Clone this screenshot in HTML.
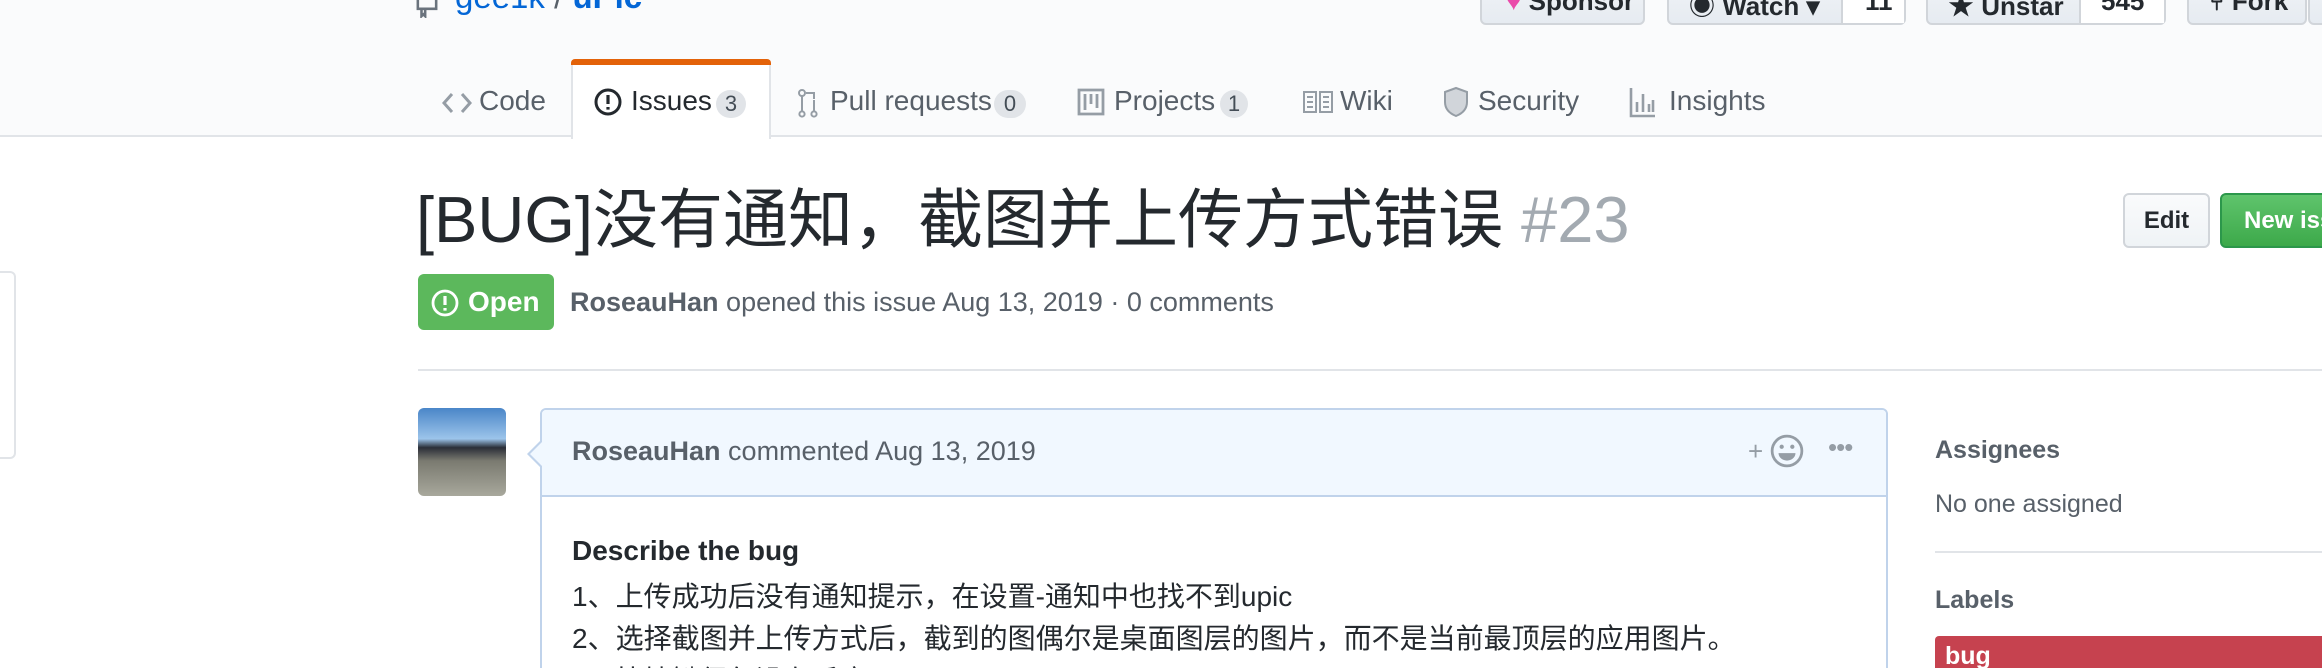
<!DOCTYPE html>
<html style="width:2322px;height:668px;overflow:hidden"><head><meta charset="utf-8"><style>
*{margin:0;padding:0;box-sizing:border-box}
body{width:2322px;height:668px;overflow:hidden;background:#fff;font-family:"Liberation Sans","Noto Sans CJK SC",sans-serif;color:#24292e;position:relative}
.a{position:absolute;white-space:nowrap}
.hdr{position:absolute;left:0;top:0;width:2322px;height:137px;background:#fafbfc;border-bottom:2px solid #e1e4e8}
.btn{position:absolute;top:-20px;height:45px;border:2px solid #d1d5da;border-radius:6px;background:linear-gradient(#f0f3f6,#e6ebf1)}
.btn .t{position:absolute;top:4px;font-size:26px;font-weight:bold}
.cnt{position:absolute;top:0;bottom:0;background:#fff;border-left:2px solid #d1d5da}
.tab{font-size:28px;color:#586069;top:85px}
.ctr{position:absolute;top:90px;height:28px;border-radius:14px;background:#e1e4e8;font-size:22px;color:#444d56;text-align:center;line-height:28px}
</style></head><body>
<div class="hdr"></div>
<svg class="a" style="left:416px;top:-4px" width="22" height="22" viewBox="0 0 12 12"><path d="M1 1h10v6H1z M3 7v4l1-1 1 1V7" fill="none" stroke="#6a737d" stroke-width="1.4"/></svg>
<div class="a" style="left:455px;top:-22px;font-size:33px;color:#0366d6;font-family:'Liberation Sans',sans-serif">gee1k <span style="color:#586069">/</span> <b>uPic</b></div>
<div class="btn" style="left:1480px;width:165px"><div class="t" style="left:24px"><span style="color:#ea4aaa">♥</span> Sponsor</div></div>
<div class="btn" style="left:1667px;width:239px"><div class="t" style="left:20px">◉ Watch ▾</div><div class="cnt" style="left:172px;right:0"><div class="t" style="left:22px">11</div></div></div>
<div class="btn" style="left:1926px;width:240px"><div class="t" style="left:20px">★ Unstar</div><div class="cnt" style="left:151px;right:0"><div class="t" style="left:20px">545</div></div></div>
<div class="btn" style="left:2187px;width:120px"><div class="t" style="left:20px">⑂ Fork</div></div>
<div class="btn" style="left:2308px;width:40px"></div>

<div class="a" style="left:571px;top:63px;width:200px;height:76px;background:#fff;border-left:2px solid #e1e4e8;border-right:2px solid #e1e4e8"></div>
<div class="a" style="left:571px;top:59px;width:200px;height:6px;background:#e36209;border-radius:4px 4px 0 0"></div>

<svg class="a" style="left:442px;top:90px" width="30" height="26" viewBox="0 0 15 13"><path d="M5 2L1 6.5 5 11M10 2l4 4.5-4 4.5" fill="none" stroke="#959da5" stroke-width="1.5"/></svg>
<div class="a tab" style="left:479px">Code</div>
<svg class="a" style="left:594px;top:88px" width="28" height="28" viewBox="0 0 14 14"><circle cx="7" cy="7" r="6" fill="none" stroke="#24292e" stroke-width="1.5"/><path d="M7 3.5v4.5M7 9.5v1.3" stroke="#24292e" stroke-width="1.6"/></svg>
<div class="a tab" style="left:631px;color:#24292e">Issues</div>
<div class="ctr" style="left:716px;width:30px">3</div>
<svg class="a" style="left:796px;top:88px" width="24" height="30" viewBox="0 0 12 15"><circle cx="3" cy="2.5" r="1.5" fill="none" stroke="#959da5"/><path d="M3 4v8M9 6v6M5 2.5h4v3" fill="none" stroke="#959da5"/><circle cx="3" cy="13" r="1.3" fill="none" stroke="#959da5"/><circle cx="9" cy="13" r="1.3" fill="none" stroke="#959da5"/></svg>
<div class="a tab" style="left:830px">Pull requests</div>
<div class="ctr" style="left:994px;width:32px">0</div>
<svg class="a" style="left:1077px;top:88px" width="28" height="28" viewBox="0 0 14 14"><path d="M1 1h12v12H1zM4 3v8M7 3v5M10 3v7" fill="none" stroke="#959da5" stroke-width="1.4"/></svg>
<div class="a tab" style="left:1114px">Projects</div>
<div class="ctr" style="left:1220px;width:28px">1</div>
<svg class="a" style="left:1302px;top:90px" width="32" height="24" viewBox="0 0 16 12"><path d="M1 1h6v10H1zM9 1h6v10H9zM2.5 3.5h3M2.5 6h3M2.5 8.5h3M10.5 3.5h3M10.5 6h3M10.5 8.5h3" fill="none" stroke="#959da5"/></svg>
<div class="a tab" style="left:1340px">Wiki</div>
<svg class="a" style="left:1443px;top:86px" width="26" height="32" viewBox="0 0 13 16"><path d="M6.5 1L1 3v5c0 4 3 6 5.5 7 2.5-1 5.5-3 5.5-7V3z" fill="#d1d5da" stroke="#959da5"/></svg>
<div class="a tab" style="left:1478px">Security</div>
<svg class="a" style="left:1629px;top:86px" width="28" height="32" viewBox="0 0 14 16"><path d="M1 1v14h12M4 13V8M7 13V4M10 13V9M12 13V7" fill="none" stroke="#959da5" stroke-width="1.3"/></svg>
<div class="a tab" style="left:1669px">Insights</div>

<div class="a" style="left:0;top:271px;width:16px;height:188px;border:2px solid #e1e4e8;border-left:0;border-radius:0 6px 6px 0"></div>

<div class="a" style="left:416px;top:180px;font-size:65px;line-height:80px;color:#24292e">[BUG]没有通知，截图并上传方式错误 <span style="color:#a3aab1">#23</span></div>
<div class="a" style="left:2123px;top:193px;width:87px;height:55px;border:2px solid #d1d5da;border-radius:6px;background:linear-gradient(#fafbfc,#eff3f6);font-size:24px;font-weight:bold;line-height:51px;text-align:center">Edit</div>
<div class="a" style="left:2220px;top:193px;width:140px;height:55px;border:2px solid #2c974b;border-radius:6px;background:linear-gradient(#5fc46c,#3da94a);font-size:24px;font-weight:bold;line-height:51px;color:#fff;padding-left:22px">New issue</div>

<div class="a" style="left:418px;top:274px;width:136px;height:56px;background:#5cb85c;border-radius:6px;color:#fff;font-size:28px;font-weight:bold;line-height:56px;padding-left:50px">Open</div>
<svg class="a" style="left:431px;top:289px" width="28" height="28" viewBox="0 0 14 14"><circle cx="7" cy="7" r="6" fill="none" stroke="#fff" stroke-width="1.4"/><path d="M7 3.5v4.5M7 9.5v1.3" stroke="#fff" stroke-width="1.6"/></svg>
<div class="a" style="left:570px;top:287px;font-size:27px;color:#586069"><b>RoseauHan</b> opened this issue Aug 13, 2019 · 0 comments</div>
<div class="a" style="left:418px;top:369px;width:1904px;height:2px;background:#e1e4e8"></div>

<div class="a" style="left:418px;top:408px;width:88px;height:88px;border-radius:6px;overflow:hidden;background:linear-gradient(#4a86c8 0%,#9cc4ea 35%,#2a2e38 45%,#7a7a70 60%,#a8a89c 100%)"></div>
<div class="a" style="left:540px;top:408px;width:1348px;height:300px;border:2px solid #c0d3eb;border-radius:6px"></div>
<div class="a" style="left:542px;top:410px;width:1344px;height:87px;background:#f1f8ff;border-bottom:2px solid #c0d3eb;border-radius:4px 4px 0 0"></div>
<div class="a" style="left:527px;top:440px;width:0;height:0;border:14px solid transparent;border-right-color:#c0d3eb;border-left:0"></div>
<div class="a" style="left:530px;top:442px;width:0;height:0;border:12px solid transparent;border-right-color:#f1f8ff;border-left:0"></div>
<div class="a" style="left:572px;top:436px;font-size:27px;color:#586069"><b>RoseauHan</b> commented Aug 13, 2019</div>
<div class="a" style="left:1748px;top:436px;font-size:26px;color:#959da5">+</div>
<svg class="a" style="left:1770px;top:434px" width="34" height="34" viewBox="0 0 16 16"><circle cx="8" cy="8" r="7" fill="none" stroke="#959da5" stroke-width="1.3"/><circle cx="5.5" cy="6" r="1" fill="#959da5"/><circle cx="10.5" cy="6" r="1" fill="#959da5"/><path d="M4 9h8c0 2-2 3.5-4 3.5S4 11 4 9z" fill="#959da5"/></svg>
<div class="a" style="left:1828px;top:432px;font-size:26px;color:#959da5;letter-spacing:-1px">•••</div>

<div class="a" style="left:572px;top:535px;font-size:28px;font-weight:bold">Describe the bug</div>
<div class="a" style="left:572px;top:575px;font-size:28px">1、上传成功后没有通知提示，在设置-通知中也找不到upic</div>
<div class="a" style="left:572px;top:617px;font-size:28px">2、选择截图并上传方式后，截到的图偶尔是桌面图层的图片，而不是当前最顶层的应用图片。</div>
<div class="a" style="left:572px;top:659px;font-size:28px">3、快捷键偶尔没有反应</div>

<div class="a" style="left:1935px;top:436px;font-size:25px;font-weight:bold;color:#586069">Assignees</div>
<div class="a" style="left:1935px;top:490px;font-size:25px;color:#586069">No one assigned</div>
<div class="a" style="left:1935px;top:551px;width:400px;height:2px;background:#e1e4e8"></div>
<div class="a" style="left:1935px;top:586px;font-size:25px;font-weight:bold;color:#586069">Labels</div>
<div class="a" style="left:1935px;top:636px;width:400px;height:40px;background:#c6424f;border-radius:4px;color:#fff;font-size:25px;font-weight:bold;padding:6px 0 0 10px">bug</div>
</body></html>
